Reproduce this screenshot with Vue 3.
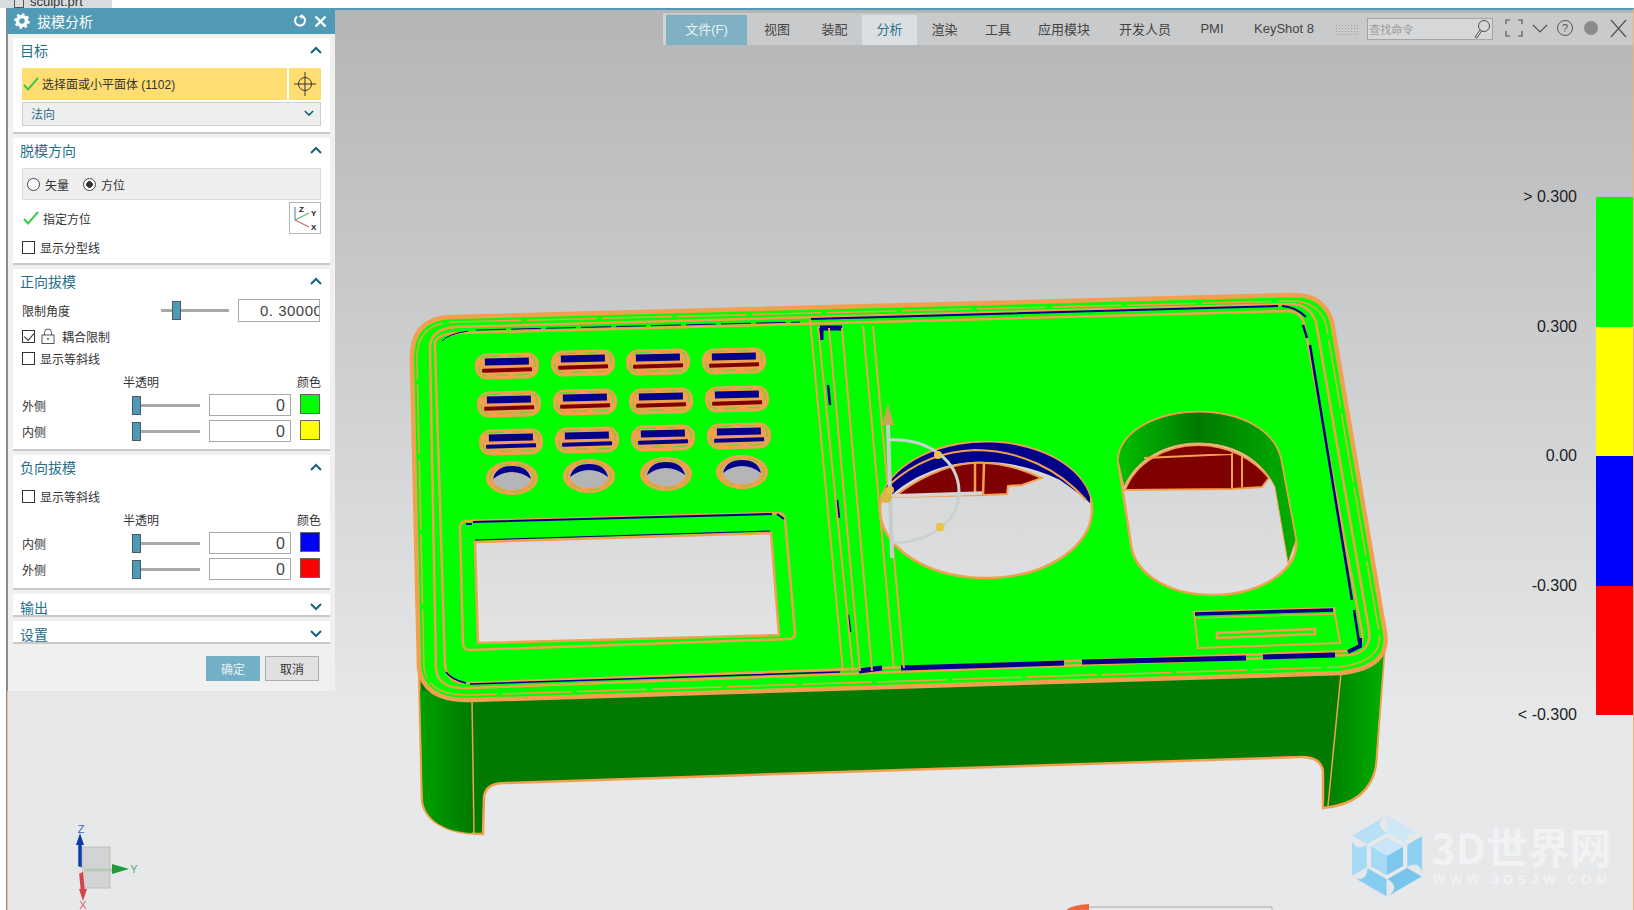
<template>
  <div class="screen">
    <div class="topstrip">
      <div class="filetab"><span class="tabglyph"></span><span>sculpt.prt</span></div>
    </div>

    <div class="viewport">
      <div class="ribbon">
        <div v-for="tab in tabs" :key="tab.label" class="tab" :class="tab.cls" :style="{ width: tab.w + 'px' }">{{ tab.label }}</div>
        <div class="grip"></div>
        <div class="search">
          <span>查找命令</span>
          <svg width="18" height="20" viewBox="0 0 18 20"><circle cx="11" cy="7" r="5.5" fill="none" stroke="#555" /><path d="M7 11 L2 18 L4 19 L8.5 12" fill="none" stroke="#555" /></svg>
        </div>
        <svg class="winicons" width="128" height="24" viewBox="0 0 128 24">
          <path d="M1 7V3H5M13 3H17V7M1 14V19H5M13 19H17V14" fill="none" stroke="#555" stroke-width="1.2" />
          <path d="M28 8 L35 15 L42 8" fill="none" stroke="#555" stroke-width="1.2" />
          <circle cx="60" cy="11" r="7.5" fill="none" stroke="#555" />
          <text x="60" y="15" text-anchor="middle" class="helpq">?</text>
          <circle cx="86" cy="11" r="7" fill="#8a8b8c" />
          <path d="M106 3 L121 20 M121 3 L106 20" stroke="#555" stroke-width="1.2" />
        </svg>
      </div>
    </div>

    <svg class="model" width="1634" height="910" viewBox="0 0 1634 910">
      <defs>
        <linearGradient id="bg" gradientUnits="userSpaceOnUse" x1="0" y1="8" x2="0" y2="711">
          <stop offset="0" stop-color="#b4b5b6" />
          <stop offset="1" stop-color="#e7e8ea" />
        </linearGradient>
        <linearGradient id="sideL" x1="0" y1="0" x2="1" y2="0">
          <stop offset="0" stop-color="#00a000" />
          <stop offset="1" stop-color="#007a00" />
        </linearGradient>
        <linearGradient id="sideR" x1="0" y1="0" x2="1" y2="0">
          <stop offset="0" stop-color="#007a00" />
          <stop offset="1" stop-color="#00b000" />
        </linearGradient>
        <linearGradient id="wall" gradientUnits="userSpaceOnUse" x1="1118" y1="0" x2="1296" y2="0">
          <stop offset="0" stop-color="#00c000" />
          <stop offset="0.45" stop-color="#007a00" />
          <stop offset="1" stop-color="#00b000" />
        </linearGradient>
      </defs>

      <!-- side walls -->
      <path d="M419 670 L422 800 C424 820 445 834 483 834 L484 797 C485 788 492 783 505 783 L1299 757 C1315 756 1323 763 1323 773 L1323 808 C1355 805 1372 790 1376 765 L1385 640 Z" fill="#007a00" stroke="#f2a04f" stroke-width="2.5" />
      <path d="M420 690 L423 800 C425 820 445 832 472 833 L472 700 Z" fill="url(#sideL)" />
      <path d="M1341 675 L1324 806 C1355 803 1371 788 1375 765 L1384 650 Z" fill="url(#sideR)" />
      <path d="M472 700 L474 834 M1341 673 L1328 806" stroke="#f2a04f" stroke-width="1.5" fill="none" />

      <!-- top face -->
      <path d="M450 317 L1294 295 Q1324 295 1332 322 L1385 633 Q1391 667 1341 673 L472 700 Q424 702 419 668 L412 362 Q410 319 450 317 Z" fill="#00ff00" stroke="#f2a04f" stroke-width="4.5" />
      <path d="M452 322 L1292 301 Q1318 301 1326 324 L1379 632 Q1384 661 1340 667 L470 695 Q428 696 424 668 L417 360 Q416 324 452 322 Z" fill="none" stroke="#f2a04f" stroke-width="1.5" stroke-dasharray="70 5" />
      <path d="M455 327 L1290 304 Q1310 304 1316 322 L1369 630 Q1372 652 1350 655 L470 688 Q437 690 436 668 L430 350 Q429 329 455 327 Z" fill="none" stroke="#f2a04f" stroke-width="2.5" />
      <path d="M458 333 L1288 311 Q1300 311 1304 323 L1362 632 Q1365 650 1347 651 L470 683 Q447 684 445 665 L435 345 Q434 334 458 333 Z" fill="none" stroke="#f2a04f" stroke-width="2.5" />

      <!-- dark blue runs on the inner ledge -->
      <g fill="none" stroke="#000088">
        <path d="M811 319 L1278 306 M1282 306 Q1296 307 1306 317" stroke-width="2" />
        <path d="M901 668 L1064 663 M1082 662 L1246 658 M1263 657 L1335 655" stroke-width="5" />
        <path d="M1348 652 L1360 646 L1360 638" stroke-width="4" />
        <path d="M1303 325 L1307 338 M1310 345 L1352 600 M1354 610 L1359 642" stroke-width="2.5" />
        <path d="M820 328 H842 M821 328 V340" stroke-width="5" />
        <path d="M828 385 L830 405 M837 500 L839 518 M848 615 L850 632" stroke-width="2.5" />
        <path d="M859 671 L882 668" stroke-width="5" />
        <path d="M470 684 L840 672 M446 672 Q452 680 466 683" stroke-width="1.5" />
        <path d="M442 341 Q448 334 468 331 M476 330 L800 322" stroke-width="1" stroke-dasharray="30 5" />
      </g>

      <!-- centre channel -->
      <g fill="none" stroke="#f2a04f" stroke-width="2">
        <path d="M810 320 L843 671 M818 326 L853 671 M829 328 L860 671 M842 328 L872 671 M863 326 L894 669 M873 326 L904 668" />
      </g>

      <!-- key caps -->
      <g v-for="key in keys" :key="key.id" :transform="`translate(${key.x} ${key.y}) rotate(-1.5)`">
        <rect x="-32" y="-13" width="64" height="26" rx="12" fill="#f2a04f" />
        <rect x="-28" y="-10" width="56" height="19" rx="7" fill="none" stroke="#6fd02e" stroke-width="1.2" stroke-dasharray="14 8" />
        <rect x="-22" y="-8" width="44" height="7" fill="#000088" />
        <rect x="-25" y="2" width="50" height="4" rx="1" :fill="key.low" />
      </g>
      <g v-for="dot in dots" :key="dot.id" :transform="`translate(${dot.x} ${dot.y})`">
        <ellipse rx="26" ry="17" fill="#f2a04f" />
        <ellipse rx="22" ry="14" fill="none" stroke="#6fd02e" stroke-dasharray="12 6" />
        <ellipse rx="19" ry="12" fill="url(#bg)" />
        <path d="M-19 1 Q-16 -12 0 -12 Q16 -12 19 1 Q10 -6 0 -6 Q-10 -6 -19 1 Z" fill="#000088" />
      </g>

      <!-- display window -->
      <path d="M466 521 L778 513 Q784 513 785 519 L795 633 Q795 639 789 639 L470 650 Q463 650 463 644 L460 528 Q460 522 466 521 Z" fill="none" stroke="#f2a04f" stroke-width="2.5" />
      <path d="M466 524 H472 M473 522 L772 514 M777 514 L784 519" stroke="#000088" stroke-width="2" fill="none" />
      <path d="M475 542 L771 533 L779 635 L478 643 Z" fill="url(#bg)" stroke="#f2a04f" stroke-width="2.5" />
      <path d="M475 540 L770 531" stroke="#000088" stroke-width="1" />

      <!-- round cut-out -->
      <ellipse cx="986" cy="510" rx="106" ry="68" fill="url(#bg)" stroke="#f2a04f" stroke-width="2.5" />
      <path d="M886 488 A106 68 0 0 1 1090 497 L1090 503 C1078 492 1068 486 1060 480 C1030 465 1000 461 972 462 C940 464 910 478 892 495 Z" fill="#000088" />
      <path d="M890 484 C915 462 945 451 975 450 C1020 450 1060 470 1086 500" fill="none" stroke="#f2a04f" stroke-width="2" />
      <path d="M894 497 C915 480 945 465 972 463 C995 461 1020 468 1042 478 L1022 485 L1008 486 L1007 494 L984 495 Z" fill="#7f0000" stroke="#f2a04f" stroke-width="2" />
      <path d="M975 462 L975 496 M984 463 L983 496" stroke="#f2a04f" stroke-width="2.5" />

      <!-- stadium cut-out -->
      <path d="M1118 460 C1120 430 1160 412 1198 412 C1240 412 1275 430 1281 460 L1296 540 C1300 570 1260 595 1213 595 C1170 595 1135 575 1131 545 Z" fill="url(#bg)" stroke="#f2a04f" stroke-width="2.5" />
      <path d="M1118 460 C1120 430 1160 412 1198 412 C1240 412 1275 430 1281 460 L1296 540 L1288 563 L1275 487 C1262 460 1235 443 1198 443 C1165 443 1135 460 1124 487 Z" fill="url(#wall)" stroke="#f2a04f" stroke-width="1" />
      <path d="M1125 490 C1135 463 1165 445 1198 445 C1230 445 1255 460 1269 478 L1262 487 L1232 489 Z" fill="#7f0000" stroke="#f2a04f" stroke-width="2" />
      <path d="M1144 458 L1232 454 M1232 453 L1232 488 M1242 455 L1242 487" stroke="#f2a04f" stroke-width="2" fill="none" />

      <!-- small label recess -->
      <path d="M1194 612 L1334 608 L1340 643 L1198 648 Z" fill="none" stroke="#f2a04f" stroke-width="2" />
      <path d="M1194 618 L1334 614" stroke="#f2a04f" stroke-width="1.5" />
      <path d="M1195 614 L1333 610" stroke="#000088" stroke-width="3.5" />
      <path d="M1217 633 L1315 629 L1315 634 L1217 638 Z" fill="none" stroke="#f2a04f" stroke-width="2.5" />

      <!-- handle -->
      <g fill="none">
        <path d="M888 425 L892 558" stroke="#c8cbcb" stroke-width="4" />
        <path d="M888 496 L982 493" stroke="#d4d6d6" stroke-width="3.5" />
        <path d="M888 440 C930 438 959 462 959 492 C959 522 930 542 892 543" stroke="#cdd0d0" stroke-width="3" />
      </g>
      <path d="M888 403 L894 425 H882 Z" fill="#c7a653" />
      <circle cx="938" cy="455" r="4" fill="#e8c64c" />
      <circle cx="940" cy="527" r="4.5" fill="#e8c64c" />
      <circle cx="886" cy="497" r="6" fill="#d9b745" />
      <circle cx="890" cy="490" r="4" fill="#e2c04c" />

      <!-- triad -->
      <rect x="82" y="847" width="28" height="41" fill="#d2d3d4" stroke="#bcbdbe" />
      <path d="M84 870 H112" stroke="#b3ccb3" stroke-width="3" />
      <path d="M80 870 V842" stroke="#0a3fa8" stroke-width="3.5" />
      <path d="M80 833 L84 845 H76 Z" fill="#0a3fa8" />
      <path d="M81 872 L83 893" stroke="#d8434b" stroke-width="4" />
      <path d="M83 901 L79 889 H87 Z" fill="#d8434b" />
      <path d="M112 869 H118" stroke="#1f9b3c" stroke-width="3" />
      <path d="M129 869 L112 864 V874 Z" fill="#1f9b3c" />
      <circle cx="79" cy="870" r="3.5" fill="#e4e4e4" />
      <text x="81" y="833" text-anchor="middle" class="axis" fill="#3a66cc">Z</text>
      <text x="83" y="909" text-anchor="middle" class="axis" fill="#d8606a">X</text>
      <text x="134" y="873" text-anchor="middle" class="axis" fill="#56ac6c">Y</text>

      <!-- watermark -->
      <path v-for="b in blades" :key="b.id" :d="b.d" :fill="b.fill" stroke="#e7e8ea" stroke-width="0.8" />
      <path d="M1387 838 L1403 847 V866 L1387 875 L1371 866 V847 Z" fill="#7cc7eb" />
      <path d="M1387 838 L1403 847 L1387 856 L1371 847 Z" fill="#cbe6f6" />
      <path d="M1371 847 L1387 856 V875 L1371 866 Z" fill="#a6d9f3" />
      <text x="1431" y="864" class="wm-big">3D世界网</text>
      <text x="1433" y="884" class="wm-small" textLength="174">WWW.3DSJW.COM</text>

      <!-- edge of a cropped note -->
      <path d="M1066 910 Q1072 905 1089 904 V910 Z" fill="#f0663a" />
      <path d="M1089 907 H1272 V910" fill="none" stroke="#a9aaab" />
    </svg>

    <div class="legend">
      <div v-for="row in legend" :key="row.label" class="legend-row">{{ row.label }}</div>
    </div>
    <div class="colorbar">
      <div v-for="c in barColors" :key="c" class="bar-seg" :style="{ background: c }"></div>
    </div>

    <div class="panel">
      <div class="panel-head">
        <svg width="18" height="18" viewBox="0 0 18 18"><circle cx="9" cy="9" r="4.5" fill="none" stroke="#fff" stroke-width="3.5" /><circle cx="9" cy="9" r="6.8" fill="none" stroke="#fff" stroke-width="2" stroke-dasharray="2.6 2.7" /></svg>
        <span class="panel-title">拔模分析</span>
        <svg class="reset" width="14" height="14" viewBox="0 0 14 14"><path d="M4 2.6 A5 5 0 1 0 9 2" fill="none" stroke="#fff" stroke-width="2" /><path d="M9.5 0 V5 L5.5 2.4 Z" fill="#fff" /></svg>
        <svg width="13" height="13" viewBox="0 0 13 13"><path d="M1.5 1.5 L11.5 11.5 M11.5 1.5 L1.5 11.5" stroke="#fff" stroke-width="2.4" /></svg>
      </div>

      <section class="section">
        <div class="sec-title"><span>目标</span><svg class="chev" viewBox="0 0 12 8"><path d="M1 7 L6 2 L11 7" /></svg></div>
        <div class="select-row">
          <div class="select-main">
            <svg class="tick" viewBox="0 0 16 14"><path d="M1 8 L5 12.5 L15 1" /></svg>
            <span>选择面或小平面体 (1102)</span>
          </div>
          <div class="select-icon">
            <svg width="22" height="24" viewBox="0 0 22 24"><circle cx="11" cy="12" r="6.5" fill="none" stroke="#333" /><path d="M0 12 H22 M11 0 V24" stroke="#333" /></svg>
          </div>
        </div>
        <div class="dropdown"><span>法向</span><svg class="chev small" viewBox="0 0 12 8"><path d="M1 1 L6 6 L11 1" /></svg></div>
      </section>

      <section class="section">
        <div class="sec-title"><span>脱模方向</span><svg class="chev" viewBox="0 0 12 8"><path d="M1 7 L6 2 L11 7" /></svg></div>
        <div class="radio-box">
          <span class="radio"></span><span class="radio-text">矢量</span>
          <span class="radio on"></span><span class="radio-text">方位</span>
        </div>
        <div class="orient-row">
          <svg class="tick" viewBox="0 0 16 14"><path d="M1 8 L5 12.5 L15 1" /></svg>
          <span class="orient-text">指定方位</span>
          <div class="orient-icon">
            <svg width="28" height="28" viewBox="0 0 28 28">
              <path d="M4 3 V16" stroke="#3a7fc4" />
              <path d="M4 16 L18 9" stroke="#3aa84a" />
              <path d="M4 16 L18 23" stroke="#d8434b" />
              <text x="8" y="8" class="mini">Z</text><text x="20" y="12" class="mini">Y</text><text x="20" y="26" class="mini">X</text>
            </svg>
          </div>
        </div>
        <label class="check-row tall"><span class="check"></span>显示分型线</label>
      </section>

      <section class="section">
        <div class="sec-title"><span>正向拔模</span><svg class="chev" viewBox="0 0 12 8"><path d="M1 7 L6 2 L11 7" /></svg></div>
        <div class="limit-row">
          <span>限制角度</span>
          <div class="slider"><span class="thumb mid"></span></div>
          <div class="field angle">0. 30000</div>
        </div>
        <div class="check-row">
          <span class="check checked"></span>
          <svg class="lock" width="14" height="16" viewBox="0 0 14 16"><path d="M3.5 7 V4.5 A3.5 3.5 0 0 1 10.5 4.5 V7" fill="none" stroke="#555" /><rect x="1" y="7" width="12" height="8.5" fill="none" stroke="#555" /><circle cx="7" cy="11" r="1" fill="#555" /></svg>
          耦合限制
        </div>
        <label class="check-row"><span class="check"></span>显示等斜线</label>
        <div class="head-row"><span>半透明</span><span>颜色</span></div>
        <div v-for="r in upperRows" :key="r.label" class="tone-row">
          <span>{{ r.label }}</span>
          <div class="slider"><span class="thumb"></span></div>
          <div class="field">0</div>
          <span class="swatch" :style="{ background: r.color }"></span>
        </div>
      </section>

      <section class="section neg">
        <div class="sec-title"><span>负向拔模</span><svg class="chev" viewBox="0 0 12 8"><path d="M1 7 L6 2 L11 7" /></svg></div>
        <label class="check-row"><span class="check"></span>显示等斜线</label>
        <div class="head-row"><span>半透明</span><span>颜色</span></div>
        <div v-for="r in lowerRows" :key="r.label" class="tone-row">
          <span>{{ r.label }}</span>
          <div class="slider"><span class="thumb"></span></div>
          <div class="field">0</div>
          <span class="swatch" :style="{ background: r.color }"></span>
        </div>
      </section>

      <section class="section closed">
        <div class="sec-title"><span>输出</span><svg class="chev" viewBox="0 0 12 8"><path d="M1 1 L6 6 L11 1" /></svg></div>
      </section>
      <section class="section closed">
        <div class="sec-title"><span>设置</span><svg class="chev" viewBox="0 0 12 8"><path d="M1 1 L6 6 L11 1" /></svg></div>
      </section>

      <div class="panel-foot">
        <button class="btn ok">确定</button>
        <button class="btn">取消</button>
      </div>
    </div>
  </div>
</template>

<script setup>
const tabs = [
  { label: '文件(F)', w: 81, cls: 'file' },
  { label: '视图', w: 60 },
  { label: '装配', w: 55 },
  { label: '分析', w: 55, cls: 'active' },
  { label: '渲染', w: 55 },
  { label: '工具', w: 52 },
  { label: '应用模块', w: 80 },
  { label: '开发人员', w: 82 },
  { label: 'PMI', w: 52 },
  { label: 'KeyShot 8', w: 92 }
];

const legend = [
  { label: '> 0.300' },
  { label: '0.300' },
  { label: '0.00' },
  { label: '-0.300' },
  { label: '< -0.300' }
];
const barColors = ['#00ff00', '#ffff00', '#0000ff', '#ff0000'];

const upperRows = [
  { label: '外侧', color: '#00ff00' },
  { label: '内侧', color: '#ffff00' }
];
const lowerRows = [
  { label: '内侧', color: '#0000ff' },
  { label: '外侧', color: '#ff0000' }
];

// key caps on the model, one row per list
const keyRows = [
  { low: '#7f0000', pts: [[507, 366], [583, 363], [658, 362], [734, 361]] },
  { low: '#7f0000', pts: [[509, 404], [585, 402], [661, 401], [737, 399]] },
  { low: '#000088', pts: [[511, 442], [587, 440], [663, 438], [739, 436]] }
];
const keys = keyRows.flatMap((row, r) =>
  row.pts.map(([x, y], i) => ({ id: `${r}-${i}`, x, y, low: row.low }))
);
const dots = [[512, 478], [589, 476], [666, 474], [742, 472]].map(([x, y], i) => ({ id: i, x, y }));

// pinwheel blades of the watermark hexagon
const bladeFill = ['#cfe8f6', '#8fd0f2', '#78c4ec', '#85cdf0', '#a6d9f3', '#b7dff5'];
const hexPoint = (r, i) => {
  const a = ((-90 + 60 * i) * Math.PI) / 180;
  return [1387 + r * Math.cos(a), 856 + r * Math.sin(a)];
};
const blades = bladeFill.map((fill, i) => {
  const v0 = hexPoint(41, i);
  const v1 = hexPoint(41, i + 1);
  const in1 = hexPoint(23, i + 1);
  const in0 = hexPoint(23, i);
  const ctrl = hexPoint(34, i + 0.6);
  return {
    id: i,
    fill,
    d: `M${v0} L${v1} Q${ctrl} ${in1} L${in0} Z`
  };
});
</script>

<style scoped>
* {
  box-sizing: border-box;
}

.screen {
  position: relative;
  width: 1634px;
  height: 910px;
  background: #fff;
  overflow: hidden;
  font-family: "Liberation Sans", "Noto Sans CJK SC", sans-serif;
  font-size: 12px;
  color: #333;
}

.topstrip {
  height: 8px;
}

.filetab {
  width: 112px;
  height: 8px;
  padding-left: 14px;
  background: #d9dcde;
  display: flex;
  align-items: flex-end;
  gap: 6px;
  overflow: hidden;
  font: 13px/13px "Liberation Sans", sans-serif;
  color: #333;
}

.tabglyph {
  width: 10px;
  height: 10px;
  border: 1px solid #555;
  flex: none;
}

.viewport {
  height: 902px;
  margin-left: 7px;
  border-left: 1px solid #f4c08c;
  border-right: 1px solid #f2b27a;
  border-top: 2px solid #519ab5;
  background: linear-gradient(#b4b5b6 0, #e7e8ea 703px);
  box-shadow: -1px 0 0 #8a8a8a;
}

.ribbon {
  margin: 3px 0 0 655px;
  height: 32px;
  background: #c9cacb;
  display: flex;
  align-items: flex-end;
  border-left: 3px solid #d2d3d4;
  color: #444;
  font-size: 13px;
}

.tab {
  height: 30px;
  padding-bottom: 3px;
  display: flex;
  align-items: center;
  justify-content: center;
  flex: none;
}

.tab.file {
  background: #7fb0c4;
  color: #e8f1f5;
}

.tab.active {
  background: #dcdfe1;
  color: #2c7391;
}

.grip {
  width: 26px;
  height: 12px;
  margin: 0 8px 9px 5px;
  background-image: radial-gradient(#9a9b9c 0.7px, transparent 0.8px);
  background-size: 3px 3px;
}

.search {
  width: 134px;
  height: 22px;
  margin-bottom: 5px;
  padding: 0 1px;
  border: 1px solid #a4a5a6;
  background: #d6d7d8;
  display: flex;
  align-items: center;
  justify-content: space-between;
  font-size: 11px;
  color: #9a9b9c;
}

.winicons {
  margin: 0 0 4px 12px;
  flex: none;
}

.helpq {
  font: 11px "Liberation Sans", sans-serif;
  fill: #555;
}

.model {
  position: absolute;
  left: 0;
  top: 0;
}

.axis {
  font: 11px "Liberation Sans", sans-serif;
}

.wm-big {
  font-family: "Noto Sans CJK SC", sans-serif;
  font-weight: 700;
  font-size: 42px;
  fill: #f1f2f3;
}

.wm-small {
  font: 700 13px "Liberation Sans", sans-serif;
  fill: #f1f2f3;
}

.legend {
  position: absolute;
  left: 1480px;
  top: 185px;
  width: 97px;
  text-align: right;
  font: 16px/24px "Liberation Sans", sans-serif;
  color: #222;
}

.legend-row {
  height: 129.5px;
}

.colorbar {
  position: absolute;
  left: 1596px;
  top: 197px;
  width: 37px;
}

.bar-seg {
  height: 129.5px;
}

.panel {
  position: absolute;
  left: 7px;
  top: 8px;
  width: 328px;
  height: 683px;
  background: #f0f0f0;
  border-left: 1px solid #8f8f8f;
}

.panel-head {
  height: 26px;
  margin-left: -1px;
  padding: 0 8px 0 6px;
  background: #519ab5;
  display: flex;
  align-items: center;
  color: #fff;
}

.panel-title {
  margin-left: 6px;
  font-size: 14px;
  flex: 1;
}

.reset {
  margin-right: 7px;
}

.section {
  margin: 4px 5px 0 5px;
  padding: 0 9px;
  background: #fff;
  border-bottom: 2px solid #c9c9c9;
}

.sec-title {
  height: 26px;
  margin: 0 -2px 4px;
  padding-bottom: 2px;
  display: flex;
  align-items: center;
  justify-content: space-between;
  font-size: 14px;
  color: #1f6f8b;
}

.section.closed .sec-title {
  height: 21px;
  margin-bottom: 0;
  padding: 4px 0 0;
}

.section.closed {
  height: 23px;
}

.chev {
  width: 12px;
  height: 8px;
  margin-right: 1px;
  fill: none;
  stroke: #17627f;
  stroke-width: 2;
}

.chev.small {
  width: 10px;
  height: 7px;
  margin: 0;
}

.tick {
  width: 16px;
  height: 14px;
  flex: none;
  fill: none;
  stroke: #3cc94a;
  stroke-width: 2;
}

.select-row {
  height: 32px;
  display: flex;
  gap: 2px;
}

.select-main {
  flex: 1;
  background: #ffdd70;
  display: flex;
  align-items: center;
  gap: 3px;
  padding: 0 0 1px 1px;
}

.select-icon {
  width: 32px;
  background: #ffdd70;
  display: flex;
  align-items: center;
  justify-content: center;
}

.dropdown {
  height: 24px;
  margin: 2px 0 6px;
  padding: 0 6px 1px 8px;
  background: #eeeeee;
  border: 1px solid #cfcfcf;
  display: flex;
  align-items: center;
  justify-content: space-between;
  color: #1f6f8b;
}

.radio-box {
  height: 32px;
  padding-left: 4px;
  background: #eeeeee;
  border: 1px solid #dcdcdc;
  display: flex;
  align-items: center;
}

.radio {
  width: 13px;
  height: 13px;
  border: 1px solid #444;
  border-radius: 50%;
  background: #fff;
  flex: none;
}

.radio.on {
  background: radial-gradient(#333 3px, #fff 3.6px);
}

.radio-text {
  margin: 0 14px 0 5px;
}

.orient-row {
  height: 32px;
  margin-top: 2px;
  display: flex;
  align-items: center;
  padding-left: 1px;
}

.orient-text {
  margin-left: 4px;
  flex: 1;
}

.orient-icon {
  width: 32px;
  height: 32px;
  border: 1px solid #b5b5b5;
  background: #fff;
  display: flex;
  align-items: center;
  justify-content: center;
}

.mini {
  font: 700 8px "Liberation Sans", sans-serif;
  fill: #222;
}

.check-row {
  height: 22px;
  display: flex;
  align-items: center;
  gap: 5px;
}

.check-row.tall {
  height: 27px;
  margin-bottom: 2px;
}

.check {
  width: 13px;
  height: 13px;
  border: 1px solid #333;
  background: #fff;
  flex: none;
  position: relative;
}

.check.checked::after {
  content: "";
  position: absolute;
  left: 3px;
  top: 0;
  width: 5px;
  height: 8px;
  border: solid #333;
  border-width: 0 1.5px 1.5px 0;
  transform: rotate(40deg);
}

.lock {
  margin: 0 2px 0 1px;
}

.limit-row {
  height: 23px;
  margin-bottom: 3px;
  display: grid;
  grid-template-columns: 130px 68px 82px;
  column-gap: 9px;
  align-items: center;
}

.head-row {
  height: 24px;
  padding-left: 101px;
  display: flex;
  align-items: center;
  justify-content: space-between;
}

.tone-row {
  height: 22px;
  margin-top: 1px;
  margin-bottom: 4px;
  display: grid;
  grid-template-columns: 101px 68px 82px 20px;
  column-gap: 9px;
  align-items: center;
}

.tone-row:last-child {
  margin-bottom: 7px;
}

.section.neg .tone-row:last-child {
  margin-bottom: 8px;
}

.slider {
  position: relative;
  height: 3px;
  background: #a9a9a9;
}

.thumb {
  position: absolute;
  left: 0;
  top: -8px;
  width: 9px;
  height: 19px;
  background: #519ab5;
  border: 1px solid #4b5a62;
}

.thumb.mid {
  left: 11px;
}

.field {
  height: 22px;
  padding-right: 5px;
  border: 1px solid #aaa;
  background: #fff;
  text-align: right;
  overflow: hidden;
  white-space: nowrap;
  font: 16px/21px "Liberation Sans", sans-serif;
  color: #444;
}

.field.angle {
  height: 23px;
  padding: 0 0 0 21px;
  text-align: left;
  font-size: 15px;
  letter-spacing: 0.5px;
}

.swatch {
  width: 20px;
  height: 20px;
  border: 1px solid #666;
  align-self: start;
}

.panel-foot {
  display: flex;
  gap: 5px;
  padding: 12px 0 0 198px;
}

.btn {
  width: 54px;
  height: 25px;
  padding: 0;
  border: 1px solid #aeaeae;
  background: #e1e1e1;
  font: inherit;
  color: #333;
}

.btn.ok {
  border-color: #73afc6;
  background: #73afc6;
  color: #e6f1f5;
}
</style>

<style>
html,
body {
  margin: 0;
  background: #fff;
}
</style>
